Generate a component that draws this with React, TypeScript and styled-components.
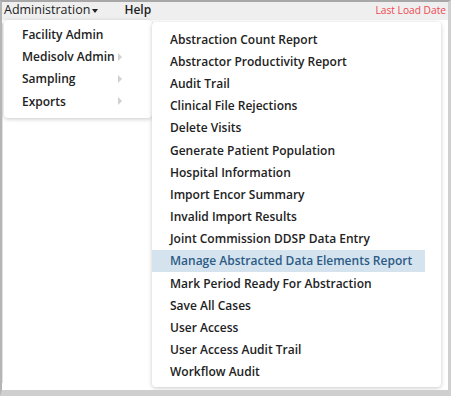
import styled, { createGlobalStyle } from 'styled-components'

const GlobalStyle = createGlobalStyle`
  html, body {
    margin: 0;
    padding: 0;
    background: #c9c9c9;
    font-family: "Open Sans", "Liberation Sans", sans-serif;
  }
`

const Window = styled.div`
  position: relative;
  width: 451px;
  height: 396px;
  box-sizing: border-box;
  border-top: 2px solid #a8a8a8;
  border-left: 2px solid #b5b5b5;
  border-right: 3px solid #d0d0d0;
  border-bottom: 6px solid #cfcfcf;
  background: #fff;
  overflow: hidden;
`

const NavBar = styled.div`
  height: 18px;
  background: #efefef;
  display: flex;
  align-items: flex-start;
  padding: 0 2px 0 2px;
  color: #1d1d1d;
`

const NavItem = styled.div<{ $bold?: boolean }>`
  display: flex;
  align-items: center;
  gap: 2px;
  font-size: ${(p) => (p.$bold ? 12 : 12.5)}px;
  line-height: 16px;
  font-weight: ${(p) => (p.$bold ? 600 : 400)};
  margin-right: ${(p) => (p.$bold ? 0 : 26)}px;
`

const Caret = styled.span`
  width: 0;
  height: 0;
  border-left: 3.5px solid transparent;
  border-right: 3.5px solid transparent;
  border-top: 4px solid #222;
  margin-top: 2px;
`

const LastLoad = styled.div`
  margin-left: auto;
  font-size: 10.2px;
  line-height: 16px;
  color: #f0474f;
`

const Content = styled.div`
  margin: 3px 0 0 0;
  height: 360px;
  border-left: 1px solid #e2e2e2;
`

const Menu = styled.div<{ $top: number; $left: number; $width: number; $height: number; $pt: number }>`
  position: absolute;
  top: ${(p) => p.$top}px;
  left: ${(p) => p.$left}px;
  width: ${(p) => p.$width}px;
  height: ${(p) => p.$height}px;
  box-sizing: border-box;
  background: #fff;
  border-radius: 4px;
  box-shadow: 0 1px 4px rgba(0, 0, 0, 0.22);
  padding-top: ${(p) => p.$pt}px;
`

const Item = styled.div<{ $active?: boolean; $pad: number; $h: number }>`
  display: flex;
  align-items: center;
  height: ${(p) => p.$h}px;
  padding-left: ${(p) => p.$pad}px;
  margin-right: ${(p) => (p.$active ? 16 : 0)}px;
  font-size: 12px;
  font-weight: 600;
  color: ${(p) => (p.$active ? '#2b5b86' : '#222')};
  background: ${(p) => (p.$active ? '#d5e3ee' : 'transparent')};
  white-space: nowrap;
`

const SubArrow = styled.span`
  position: absolute;
  left: 114px;
  width: 0;
  height: 0;
  border-top: 4px solid transparent;
  border-bottom: 4px solid transparent;
  border-left: 4px solid #d0d0d0;
`

const Row = styled.div`
  position: relative;
  display: flex;
  align-items: center;
`

const adminItems = [
  { label: 'Facility Admin', sub: false },
  { label: 'Medisolv Admin', sub: true },
  { label: 'Sampling', sub: true },
  { label: 'Exports', sub: true },
]

const reports = [
  'Abstraction Count Report',
  'Abstractor Productivity Report',
  'Audit Trail',
  'Clinical File Rejections',
  'Delete Visits',
  'Generate Patient Population',
  'Hospital Information',
  'Import Encor Summary',
  'Invalid Import Results',
  'Joint Commission DDSP Data Entry',
  'Manage Abstracted Data Elements Report',
  'Mark Period Ready For Abstraction',
  'Save All Cases',
  'User Access',
  'User Access Audit Trail',
  'Workflow Audit',
]

export default function App() {
  return (
    <>
      <GlobalStyle />
      <Window>
        <NavBar>
          <NavItem>
            Administration
            <Caret />
          </NavItem>
          <NavItem $bold>Help</NavItem>
          <LastLoad>Last Load Date</LastLoad>
        </NavBar>
        <Content />
        <Menu $top={18} $left={2} $width={148} $height={98} $pt={3}>
          {adminItems.map((it) => (
            <Row key={it.label}>
              <Item $pad={18} $h={22.4}>{it.label}</Item>
              {it.sub && <SubArrow />}
            </Row>
          ))}
        </Menu>
        <Menu $top={20} $left={150} $width={289} $height={365} $pt={6}>
          {reports.map((r, i) => (
            <Item key={r} $pad={18} $h={22.2} $active={i === 10}>
              {r}
            </Item>
          ))}
        </Menu>
      </Window>
    </>
  )
}
